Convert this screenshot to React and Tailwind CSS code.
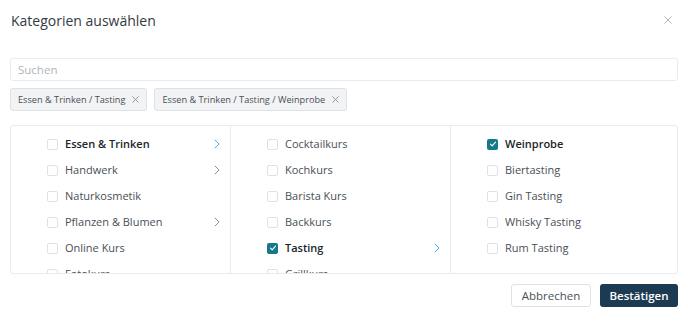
import React from 'react';

const columns = [
  [
    { label: 'Essen & Trinken', active: true, children: true },
    { label: 'Handwerk', children: true },
    { label: 'Naturkosmetik' },
    { label: 'Pflanzen & Blumen', children: true },
    { label: 'Online Kurs' },
    { label: 'Fotokurs' },
  ],
  [
    { label: 'Cocktailkurs' },
    { label: 'Kochkurs' },
    { label: 'Barista Kurs' },
    { label: 'Backkurs' },
    { label: 'Tasting', active: true, checked: true, children: true },
    { label: 'Grillkurs' },
  ],
  [
    { label: 'Weinprobe', active: true, checked: true },
    { label: 'Biertasting' },
    { label: 'Gin Tasting' },
    { label: 'Whisky Tasting' },
    { label: 'Rum Tasting' },
  ],
];

const chips = ['Essen & Trinken / Tasting', 'Essen & Trinken / Tasting / Weinprobe'];

const Checkbox = ({ checked }) =>
  checked ? (
    <span className="flex h-[11px] w-[11px] flex-shrink-0 items-center justify-center rounded-[2px] bg-[#16798a]">
      <svg width="8" height="8" viewBox="0 0 8 8" fill="none">
        <path d="M1.5 4.2 3.2 5.8 6.5 2.2" stroke="white" strokeWidth="1.1" strokeLinecap="round" strokeLinejoin="round" />
      </svg>
    </span>
  ) : (
    <span className="h-[11px] w-[11px] flex-shrink-0 rounded-[2px] border border-[#dee2e6] bg-white" />
  );

const Chevron = ({ active }) => (
  <svg width="6" height="10" viewBox="0 0 6 10" fill="none" className="flex-shrink-0">
    <path d="M1 1l4 4-4 4" stroke={active ? '#4dabf7' : '#868e96'} strokeWidth="1" strokeLinecap="round" strokeLinejoin="round" />
  </svg>
);

const Row = ({ item }) => (
  <div className="flex h-[26px] items-center pl-[36px] pr-[10px]">
    <Checkbox checked={item.checked} />
    <span
      className={`ml-[7px] flex-1 whitespace-nowrap text-[11px] ${
        item.active ? 'font-semibold text-[#212529]' : 'text-[#495057]'
      }`}
    >
      {item.label}
    </span>
    {item.children && <Chevron active={item.active} />}
  </div>
);

export default function App() {
  return (
    <div className="h-[321px] w-[688px] overflow-hidden bg-white px-[10px] font-['Open_Sans',sans-serif]">
      <div className="flex h-[40px] items-center justify-between pl-[1px]">
        <h2 className="text-[14px] font-normal text-[#343a40]">Kategorien auswählen</h2>
        <svg width="8" height="8" viewBox="0 0 8 8" className="mr-[6px]">
          <path d="M0.5 0.5l7 7M7.5 0.5l-7 7" stroke="#adb5bd" strokeWidth="1" />
        </svg>
      </div>

      <div className="mt-[18px] flex h-[23px] items-center rounded-[3px] border border-[#e9ecef] px-[7px]">
        <span className="text-[11.5px] text-[#adb5bd]">Suchen</span>
      </div>

      <div className="mt-[7px] flex gap-[7px]">
        {chips.map((c) => (
          <div
            key={c}
            className="flex h-[23px] items-center gap-[7px] rounded-[3px] border border-[#dee2e6] bg-[#f1f3f5] pl-[7px] pr-[7px]"
          >
            <span className="text-[9.2px] font-medium text-[#495057]">{c}</span>
            <svg width="7" height="7" viewBox="0 0 7 7">
              <path d="M0.5 0.5l6 6M6.5 0.5l-6 6" stroke="#868e96" strokeWidth="0.9" />
            </svg>
          </div>
        ))}
      </div>

      <div className="mt-[14px] flex h-[149px] overflow-hidden rounded-[3px] border border-[#e9ecef]">
        {columns.map((col, i) => (
          <div
            key={i}
            className={`pt-[5px] ${i < 2 ? 'w-[220px] border-r border-[#e9ecef]' : 'flex-1'}`}
          >
            {col.map((item) => (
              <Row key={item.label} item={item} />
            ))}
          </div>
        ))}
      </div>

      <div className="mt-[10px] flex justify-end gap-[9px]">
        <button className="h-[23px] w-[80px] rounded-[3px] border border-[#dee2e6] bg-white text-[11.5px] text-[#495057]">
          Abbrechen
        </button>
        <button className="h-[23px] w-[78px] rounded-[3px] bg-[#1c3a52] text-[11.5px] font-semibold text-white">
          Bestätigen
        </button>
      </div>
    </div>
  );
}
